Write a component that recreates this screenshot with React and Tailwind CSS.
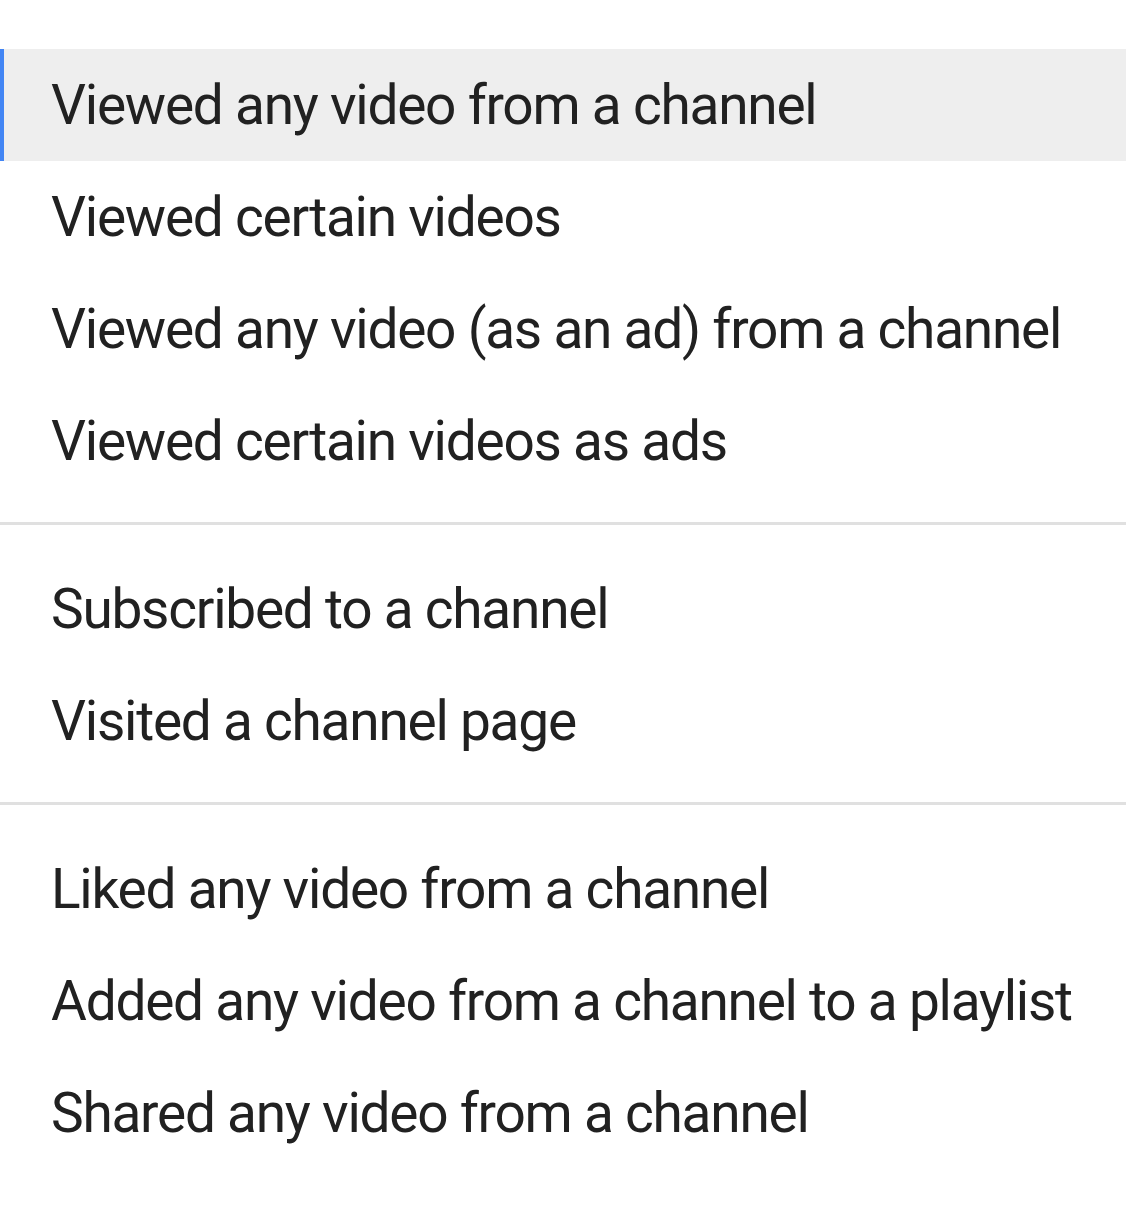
const groups = [
  [
    "Viewed any video from a channel",
    "Viewed certain videos",
    "Viewed any video (as an ad) from a channel",
    "Viewed certain videos as ads",
  ],
  ["Subscribed to a channel", "Visited a channel page"],
  [
    "Liked any video from a channel",
    "Added any video from a channel to a playlist",
    "Shared any video from a channel",
  ],
];

export default function App() {
  return (
    <div className="min-h-[1220px] w-[1126px] bg-white pt-[49px] font-['Roboto',sans-serif] text-[#212121]">
      {groups.map((items, gi) => (
        <div key={gi}>
          {gi > 0 && <div className="mt-[25px] mb-[28px] h-[3px] bg-[#e0e0e0]" />}
          {items.map((label, i) => {
            const active = gi === 0 && i === 0;
            return (
              <div
                key={label}
                className={
                  active
                    ? "flex h-[112px] items-center border-l-4 border-[#4285f4] bg-[#eeeeee] pl-[47px] text-[55px] tracking-[-1.25px] leading-none whitespace-nowrap"
                    : "flex h-[112px] items-center pl-[51px] text-[55px] tracking-[-1.25px] leading-none whitespace-nowrap"
                }
              >
                {label}
              </div>
            );
          })}
        </div>
      ))}
    </div>
  );
}
